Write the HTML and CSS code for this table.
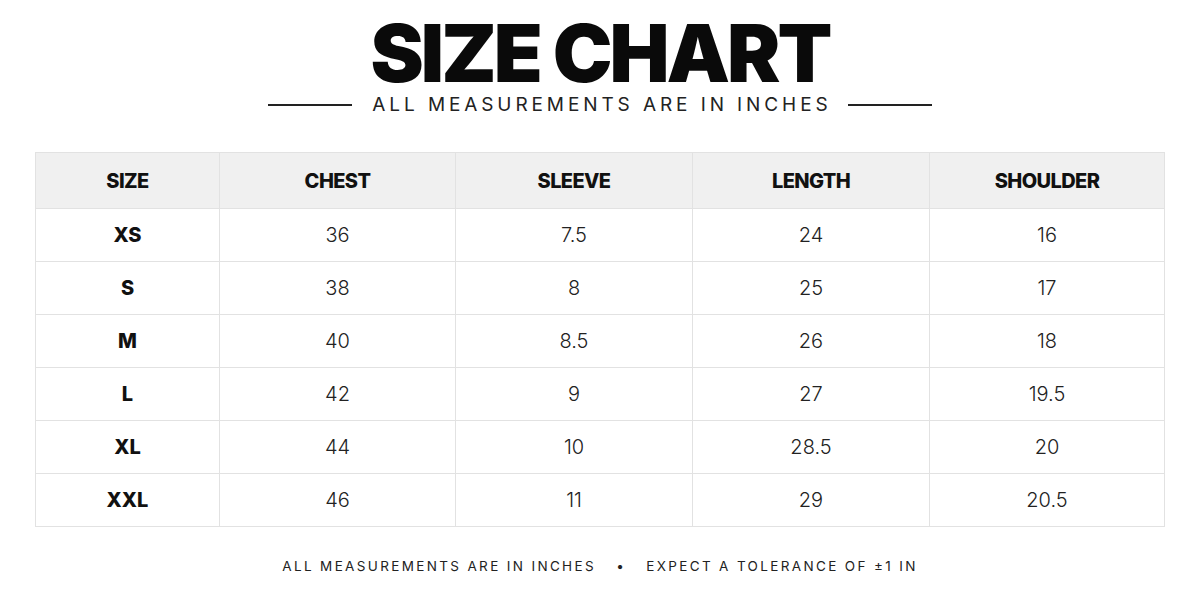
FILE: index.html
```html
<!DOCTYPE html>
<html lang="en">
<head>
<meta charset="utf-8">
<title>Size Chart</title>
<link rel="stylesheet" href="styles.css">
</head>
<body>
<main class="page">
  <header class="head">
    <h1 class="title">SIZE CHART</h1>
    <div class="subtitle">
      <span class="rule"></span>
      <span class="subtext">ALL MEASUREMENTS ARE IN INCHES</span>
      <span class="rule"></span>
    </div>
  </header>
  <table class="chart">
    <colgroup>
      <col class="c1"><col class="c2"><col class="c3"><col class="c4"><col class="c5">
    </colgroup>
    <thead>
      <tr><th>SIZE</th><th>CHEST</th><th>SLEEVE</th><th>LENGTH</th><th>SHOULDER</th></tr>
    </thead>
    <tbody>
      <tr><th>XS</th><td>36</td><td>7.5</td><td>24</td><td>16</td></tr>
      <tr><th>S</th><td>38</td><td>8</td><td>25</td><td>17</td></tr>
      <tr><th>M</th><td>40</td><td>8.5</td><td>26</td><td>18</td></tr>
      <tr><th>L</th><td>42</td><td>9</td><td>27</td><td>19.5</td></tr>
      <tr><th>XL</th><td>44</td><td>10</td><td>28.5</td><td>20</td></tr>
      <tr><th>XXL</th><td>46</td><td>11</td><td>29</td><td>20.5</td></tr>
    </tbody>
  </table>
  <p class="foot">ALL MEASUREMENTS ARE IN INCHES <span class="dot">•</span> EXPECT A TOLERANCE OF ±1 IN</p>
</main>
</body>
</html>
```
FILE: styles.css
```css
html, body {
  margin: 0;
  padding: 0;
  background: #fff;
}
body {
  width: 1200px;
  height: 600px;
  overflow: hidden;
  font-family: Inter, "Liberation Sans", sans-serif;
  color: #111;
}
.page {
  display: flex;
  flex-direction: column;
  align-items: center;
  padding-top: 18px;
}
.head {
  display: flex;
  flex-direction: column;
  align-items: center;
}
.title {
  margin: 0;
  font-size: 80px;
  line-height: 70px;
  font-weight: 900;
  letter-spacing: -3px;
  color: #0a0a0a;
}
.subtitle {
  display: flex;
  align-items: center;
  gap: 20px;
  margin-top: 5px;
}
.rule {
  display: block;
  width: 84px;
  height: 1.5px;
  background: #222;
}
.subtext {
  font-size: 19px;
  font-weight: 400;
  letter-spacing: 3.9px;
  color: #222;
  line-height: 24px;
  margin-right: -3.9px;
}
.chart {
  margin-top: 35px;
  width: 1129px;
  border-collapse: collapse;
  table-layout: fixed;
}
.c1 { width: 184px; }
.c2 { width: 236px; }
.c3 { width: 237px; }
.c4 { width: 237px; }
.c5 { width: 235px; }
.chart th, .chart td {
  border: 1.5px solid #e2e2e2;
  text-align: center;
  padding: 0;
  height: 52px;
}
.chart thead th {
  background: #f0f0f0;
  height: 55px;
  font-size: 20px;
  font-weight: 800;
  letter-spacing: -0.6px;
  color: #111;
}
.chart tbody th {
  font-size: 20px;
  font-weight: 800;
  color: #111;
}
.chart td {
  font-size: 20px;
  font-weight: 300;
  color: #222;
}
.foot {
  margin: 31px 0 0;
  font-size: 13.5px;
  letter-spacing: 2.35px;
  color: #222;
  font-weight: 400;
}
.dot {
  margin: 0 14px;
}
```
